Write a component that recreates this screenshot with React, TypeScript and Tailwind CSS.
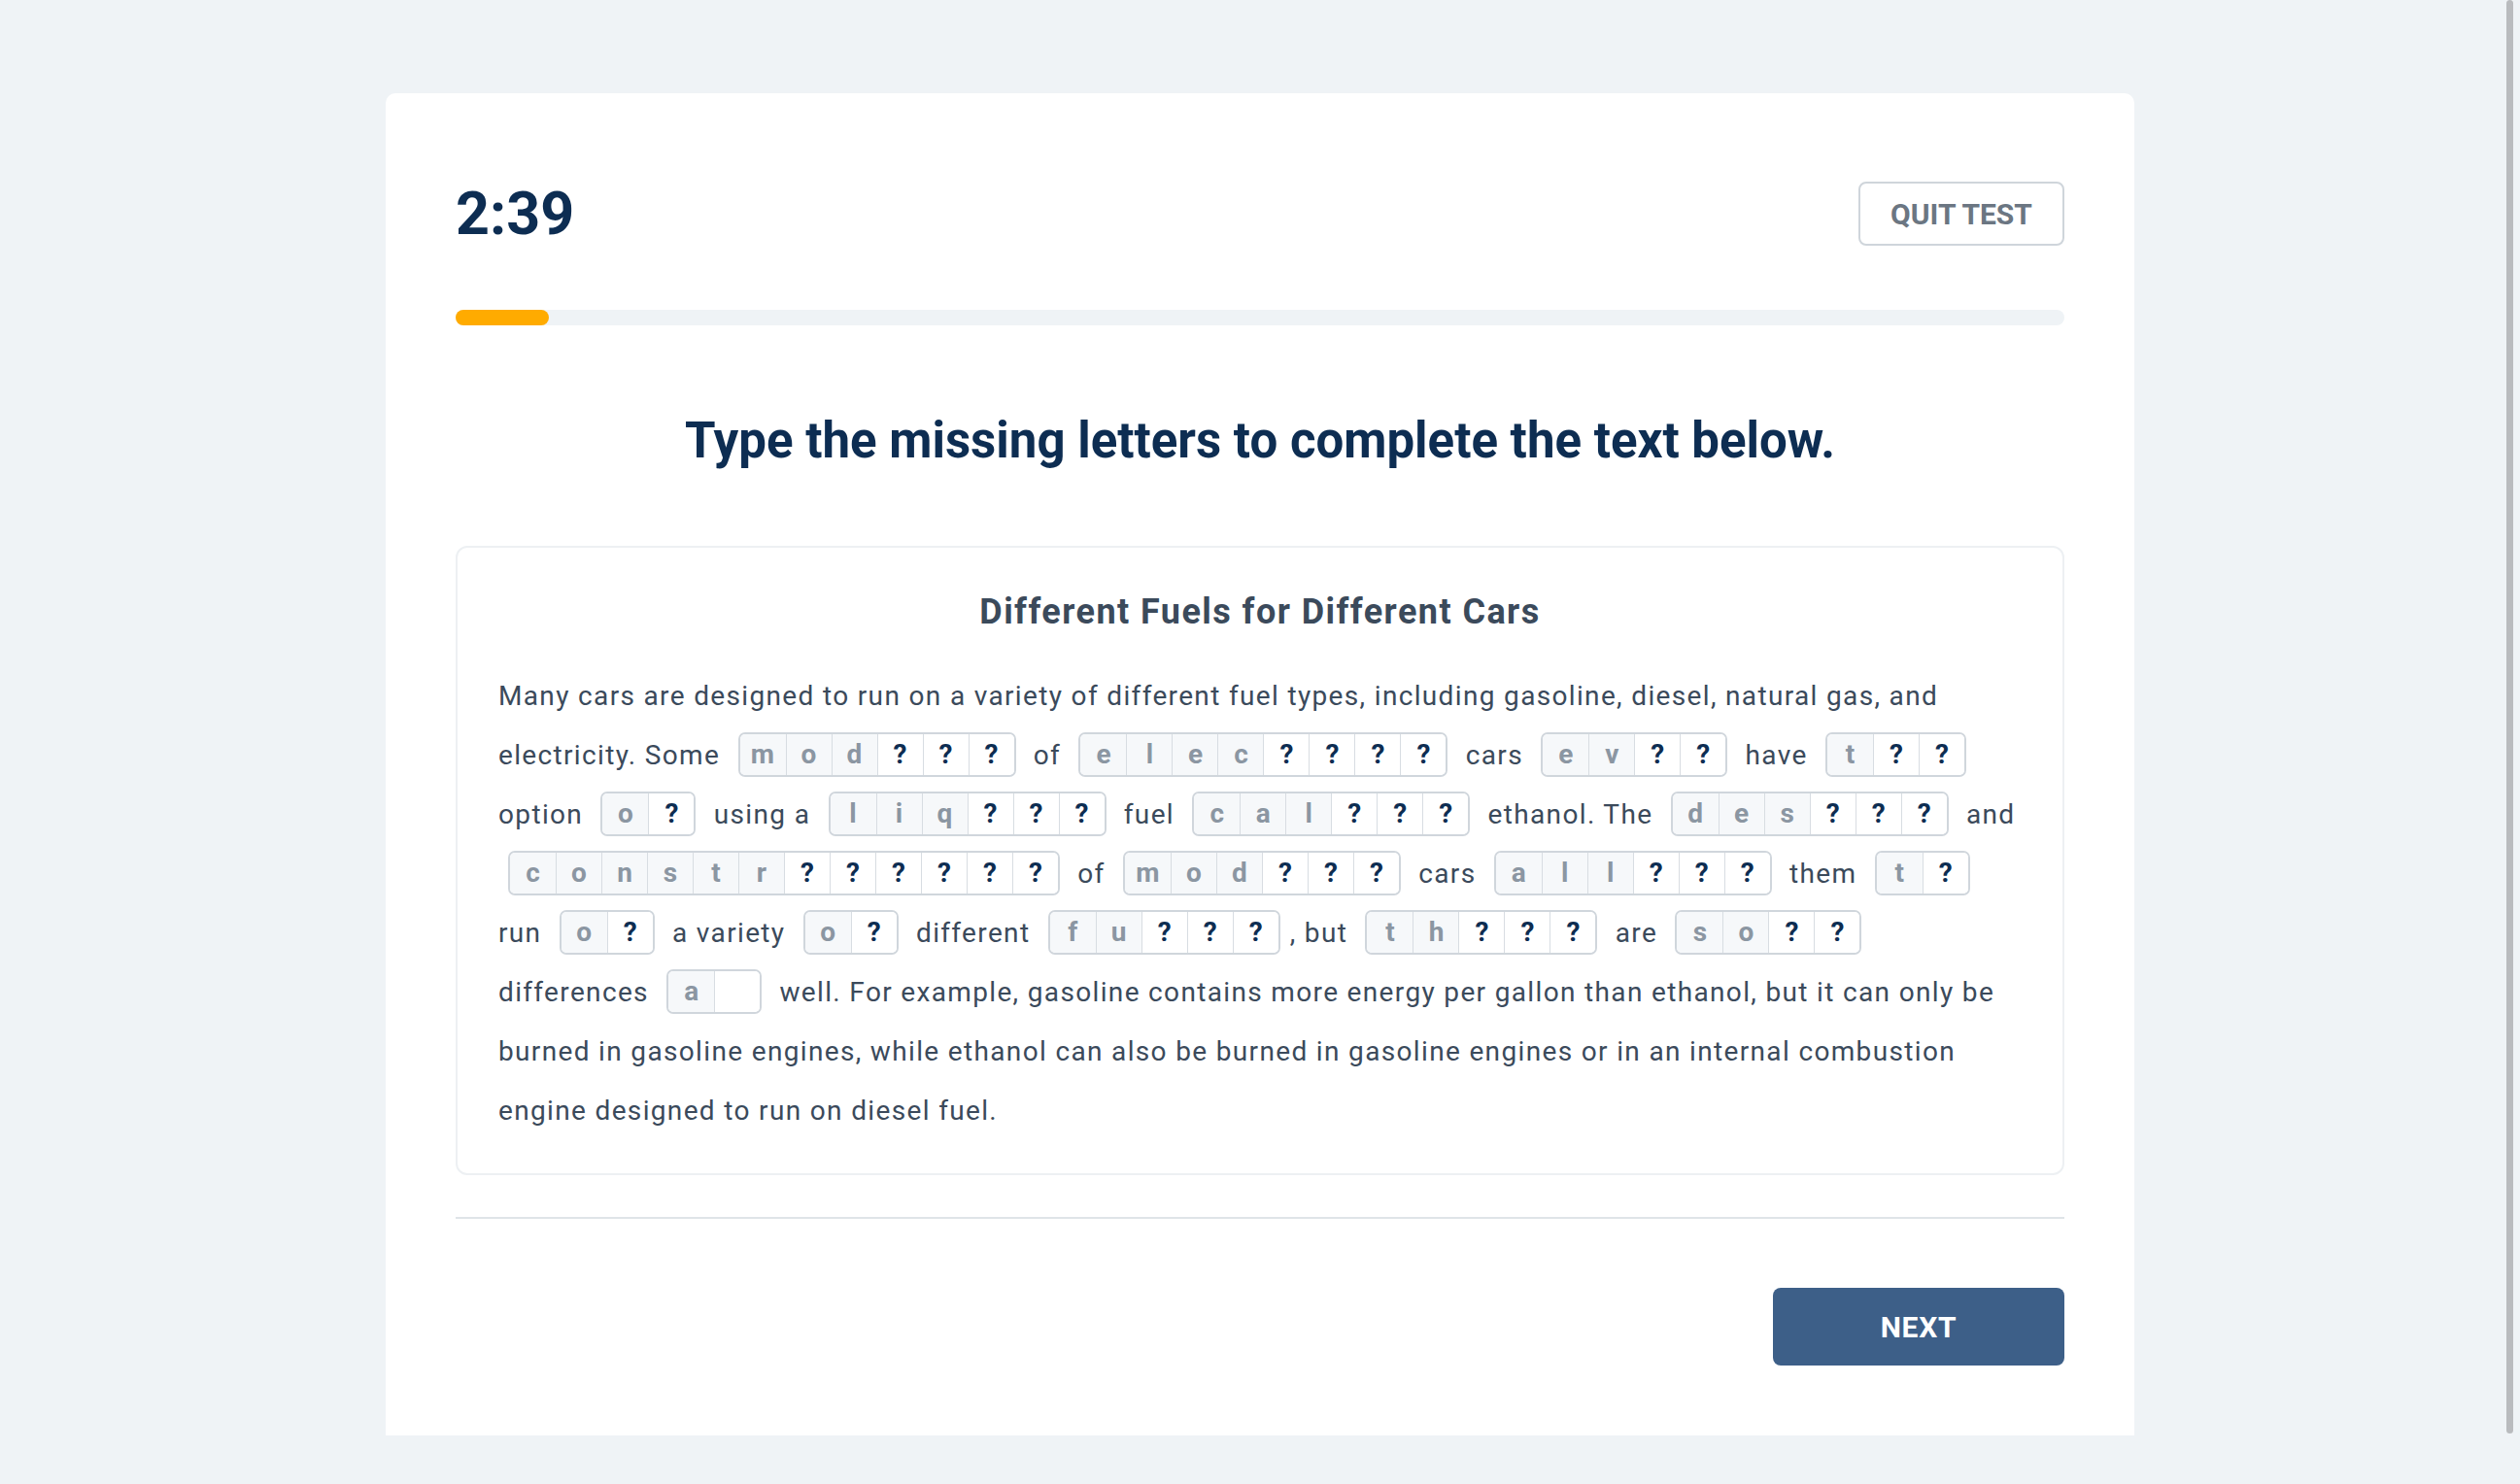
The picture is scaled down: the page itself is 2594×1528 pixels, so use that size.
import type { ReactNode } from "react";

type Gap = { given: string; missing: number; blank?: boolean };

// passage pieces: plain strings and letter groups
const passage: (string | Gap)[] = [
  "Many cars are designed to run on a variety of different fuel types, including gasoline, diesel, natural gas, and electricity. Some ",
  { given: "mod", missing: 3 },
  " of ",
  { given: "elec", missing: 4 },
  " cars ",
  { given: "ev", missing: 2 },
  " have ",
  { given: "t", missing: 2 },
  " option ",
  { given: "o", missing: 1 },
  " using a ",
  { given: "liq", missing: 3 },
  " fuel ",
  { given: "cal", missing: 3 },
  " ethanol. The ",
  { given: "des", missing: 3 },
  " and ",
  { given: "constr", missing: 6 },
  " of ",
  { given: "mod", missing: 3 },
  " cars ",
  { given: "all", missing: 3 },
  " them ",
  { given: "t", missing: 1 },
  " run ",
  { given: "o", missing: 1 },
  " a variety ",
  { given: "o", missing: 1 },
  " different ",
  { given: "fu", missing: 3 },
  ", but ",
  { given: "th", missing: 3 },
  " are ",
  { given: "so", missing: 2 },
  " differences ",
  { given: "a", missing: 1, blank: true },
  " well. For example, gasoline contains more energy per gallon than ethanol, but it can only be burned in gasoline engines, while ethanol can also be burned in gasoline engines or in an internal combustion engine designed to run on diesel fuel.",
];

function LetterGroup({ gap }: { gap: Gap }) {
  const cells: ReactNode[] = [];
  gap.given.split("").forEach((ch, i) => {
    cells.push(
      <span
        key={"g" + i}
        className={`${i > 0 ? "border-l border-[#d8dde2]" : ""} w-[47px] h-[42px] flex items-center justify-center bg-[#f6f8fa] text-[#8b96a2] font-bold`}
      >
        {ch}
      </span>
    );
  });
  for (let i = 0; i < gap.missing; i++) {
    cells.push(
      <span
        key={"m" + i}
        className="border-l border-[#d8dde2] w-[47px] h-[42px] flex items-center justify-center bg-white text-[#0d2d52] font-bold"
      >
        {gap.blank ? "" : "?"}
      </span>
    );
  }
  return (
    <span className="inline-flex align-middle -translate-y-[3px] mx-[10px] border-2 border-[#d0d6dc] rounded-[7px] overflow-hidden leading-none tracking-normal">
      {cells}
    </span>
  );
}

export default function App() {
  return (
    <div className="min-h-screen bg-[#eff3f6] font-['Roboto','Liberation_Sans',sans-serif]">
      <div className="fixed right-[7px] top-0 w-[7px] h-[1476px] bg-[#b9bbbe] rounded-full" />
      <div className="mx-auto w-[1800px] pt-[96px]">
        <div className="bg-white rounded-t-[10px] px-[72px] pt-[91px] pb-[72px]">
          <div className="flex items-center justify-between h-[66px]">
            <div className="text-[61px] leading-none font-bold text-[#0d2d52]">2:39</div>
            <button className="w-[212px] h-[66px] border-2 border-[#cfd5db] rounded-[8px] text-[30px] font-bold text-[#6b7682]">
              QUIT TEST
            </button>
          </div>

          <div className="mt-[66px] h-[16px] rounded-full bg-[#eff3f6]">
            <div className="h-full w-[96px] rounded-full bg-[#ffab00]" />
          </div>

          <h1 className="mt-[88px] text-center text-[51px] leading-[1.2] font-bold text-[#0d2d52]">
            Type the missing letters to complete the text below.
          </h1>

          <div className="mt-[78px] border-2 border-[#edf0f3] rounded-[12px] px-[42px] pt-[45px] pb-[34px]">
            <h2 className="text-center text-[36px] leading-[1.2] font-bold tracking-[0.04em] text-[#3b4a5b]">
              Different Fuels for Different Cars
            </h2>
            <p className="mt-[34px] text-[28px] leading-[61px] tracking-[0.048em] text-[#3b4a5b]">
              {passage.map((part, i) =>
                typeof part === "string" ? part : <LetterGroup key={i} gap={part} />
              )}
            </p>
          </div>

          <div className="mt-[43px] h-[2px] bg-[#dfe4e8]" />

          <div className="mt-[71px] flex justify-end">
            <button className="w-[300px] h-[80px] rounded-[8px] bg-[#3d5f88] text-white text-[30px] font-bold tracking-wide">
              NEXT
            </button>
          </div>
        </div>
      </div>
    </div>
  );
}
